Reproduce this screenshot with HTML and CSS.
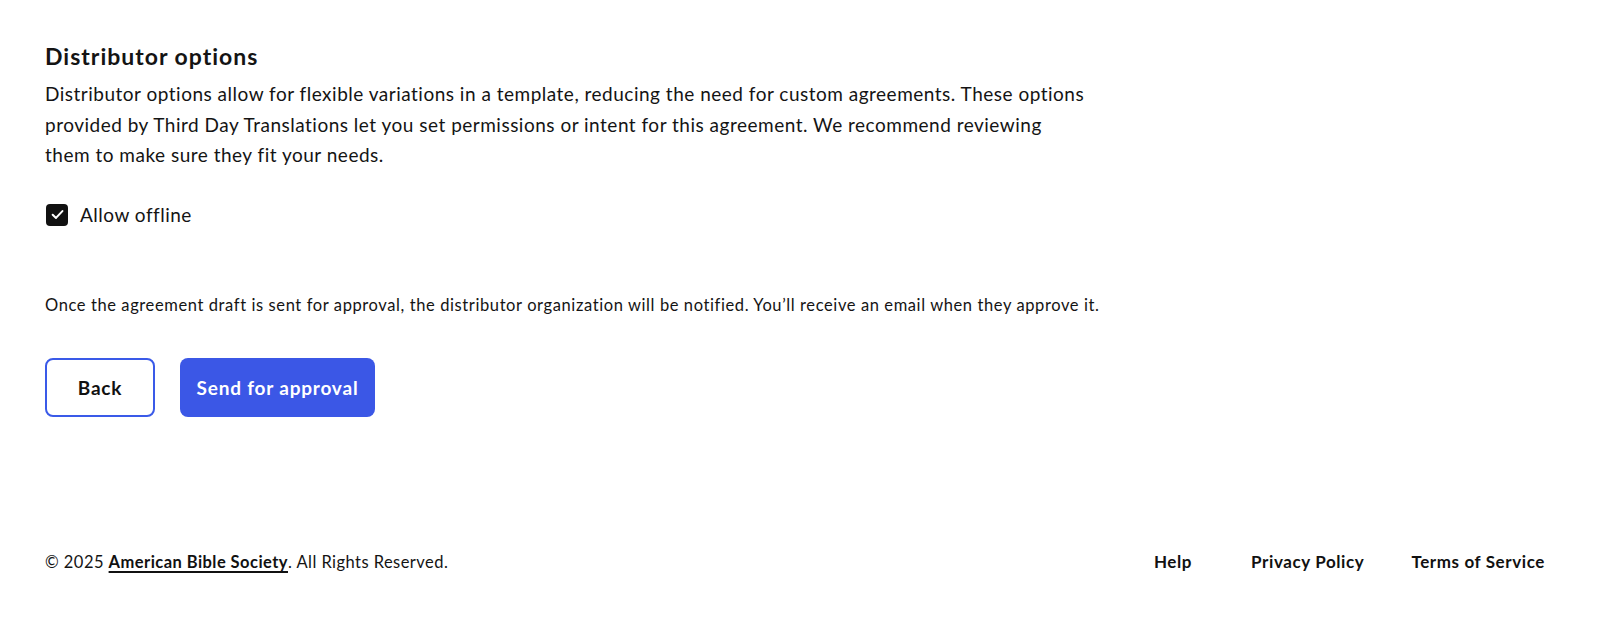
FILE: index.html
```html
<!DOCTYPE html>
<html lang="en">
<head>
    <meta charset="utf-8"/>
    <title>Distributor options</title>
    <link rel="stylesheet" href="styles.css">
</head>
<body>
    <div class="page">
        <main class="content">
            <h2 class="title">Distributor options</h2>
            <p class="intro">Distributor options allow for flexible variations in a template, reducing the need for custom agreements. These options provided by Third Day Translations let you set permissions or intent for this agreement. We recommend reviewing them to make sure they fit your needs.</p>
            <label class="option">
                <span class="box">
                    <svg width="15" height="15" viewBox="0 0 14 14"><path d="M2.5 7.2 L5.6 10.2 L11.6 3.8" fill="none" stroke="#fff" stroke-width="1.9" stroke-linecap="round" stroke-linejoin="round"/></svg>
                </span>
                Allow offline
            </label>
            <p class="notice">Once the agreement draft is sent for approval, the distributor organization will be notified. You’ll receive an email when they approve it.</p>
            <div class="actions">
                <button class="btn btn-back">Back</button>
                <button class="btn btn-send">Send for approval</button>
            </div>
        </main>
        <footer class="footer">
            <div class="copy">© 2025 <a href="#" class="org">American Bible Society</a>. All Rights Reserved.</div>
            <nav class="links">
                <a href="#">Help</a>
                <a href="#">Privacy Policy</a>
                <a href="#">Terms of Service</a>
            </nav>
        </footer>
    </div>
</body>
</html>
```

FILE: styles.css
```css
* {
    box-sizing: border-box;
}
body {
    margin: 0;
    font-family: "Lato", "Noto Sans", sans-serif;
    color: #141414;
    background: #fff;
}
.page {
    min-height: 100vh;
    display: flex;
    flex-direction: column;
    padding: 42px 55px 43px 45px;
}
.content {
    max-width: 1064px;
}
.title {
    margin: 0;
    font-size: 23px;
    line-height: 28px;
    font-weight: 700;
    letter-spacing: 1px;
}
.intro {
    max-width: 1043px;
    margin: 9px 0 0;
    font-size: 19px;
    line-height: 30.6px;
    letter-spacing: 0.5px;
}
.option {
    margin-top: 32px;
    display: flex;
    align-items: center;
    gap: 12px;
    font-size: 19px;
    line-height: 24px;
    letter-spacing: 0.5px;
}
.option .box {
    width: 22px;
    height: 22px;
    margin-left: 1px;
    border-radius: 4px;
    background: #111;
    display: flex;
    align-items: center;
    justify-content: center;
}
.notice {
    margin: 67px 0 0;
    font-size: 16.5px;
    line-height: 22px;
    letter-spacing: 0.6px;
}
.actions {
    margin-top: 42px;
    display: flex;
    gap: 25px;
}
.btn {
    height: 59px;
    padding: 0;
    border-radius: 8px;
    font-family: inherit;
    font-size: 19px;
    font-weight: 700;
    letter-spacing: 0.8px;
    white-space: nowrap;
    cursor: pointer;
}
.btn-back {
    width: 110px;
    background: #fff;
    color: #111;
    border: 2px solid #3a5ae8;
}
.btn-send {
    width: 195px;
    background: #3b57e6;
    color: #fff;
    border: none;
}
.footer {
    margin-top: auto;
    display: flex;
    justify-content: space-between;
    align-items: center;
    font-size: 16.5px;
    line-height: 24px;
    letter-spacing: 0.45px;
}
.footer a {
    color: #111;
    text-decoration: none;
    font-weight: 700;
}
.footer .org {
    text-decoration: underline;
    text-decoration-thickness: 1.5px;
    text-underline-offset: 3px;
}
.links {
    display: flex;
    gap: 47px;
}
.links a {
    font-size: 17px;
    letter-spacing: 0.6px;
}
.links a:first-child {
    margin-right: 12px;
}
```
